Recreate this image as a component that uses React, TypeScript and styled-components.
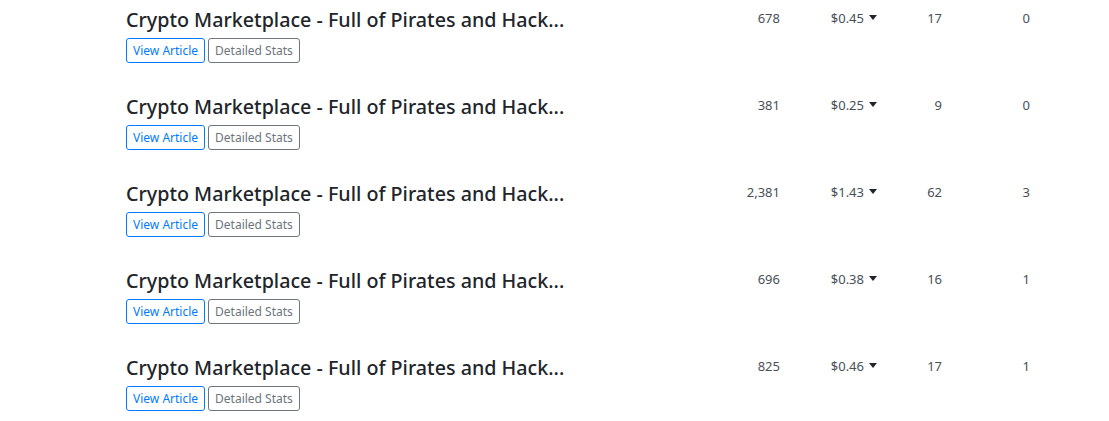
import React from "react";
import styled, { createGlobalStyle } from "styled-components";

interface Article {
  title: string;
  views: string;
  earnings: string;
  reads: number;
  comments: number;
}

const articles: Article[] = [
  { title: "Crypto Marketplace - Full of Pirates and Hack...", views: "678", earnings: "$0.45", reads: 17, comments: 0 },
  { title: "Crypto Marketplace - Full of Pirates and Hack...", views: "381", earnings: "$0.25", reads: 9, comments: 0 },
  { title: "Crypto Marketplace - Full of Pirates and Hack...", views: "2,381", earnings: "$1.43", reads: 62, comments: 3 },
  { title: "Crypto Marketplace - Full of Pirates and Hack...", views: "696", earnings: "$0.38", reads: 16, comments: 1 },
  { title: "Crypto Marketplace - Full of Pirates and Hack...", views: "825", earnings: "$0.46", reads: 17, comments: 1 },
];

const App: React.FC = () => {
  return (
    <>
      <GlobalStyle />
      <Table>
        {articles.map((a, i) => (
          <Row key={i}>
            <TitleCell>
              <Title>{a.title}</Title>
              <Actions>
                <Button variant="primary">View Article</Button>
                <Button variant="secondary">Detailed Stats</Button>
              </Actions>
            </TitleCell>
            <NumCell>{a.views}</NumCell>
            <NumCell>
              <Earnings>{a.earnings}</Earnings>
            </NumCell>
            <NumCell>{a.reads}</NumCell>
            <NumCell>{a.comments}</NumCell>
          </Row>
        ))}
      </Table>
    </>
  );
};

export default App;

const GlobalStyle = createGlobalStyle`
  body {
    margin: 0;
    background: #fff;
    font-family: "Noto Sans", "Open Sans", sans-serif;
    color: #212529;
  }
`;

const Table = styled.div`
  width: 1109px;
  padding-left: 126px;
  box-sizing: border-box;
`;

const Row = styled.div`
  display: grid;
  grid-template-columns: 560px 94px 97px 65px 88px;
  align-items: start;
  padding: 8px 0 24px;
  height: 87px;
  box-sizing: border-box;
`;

const TitleCell = styled.div`
  display: flex;
  flex-direction: column;
  gap: 6px;
`;

const Title = styled.h5`
  margin: 0;
  font-size: 19.7px;
  font-weight: 500;
  line-height: 24px;
  color: #212529;
  white-space: nowrap;
`;

const Actions = styled.div`
  display: flex;
  gap: 3px;
`;

const Button = styled.button<{ variant: "primary" | "secondary" }>`
  font-family: inherit;
  font-size: 12px;
  line-height: 19px;
  padding: 2px 6px;
  border-radius: 3px;
  background: #fff;
  cursor: pointer;
  border: 1px solid ${(p) => (p.variant === "primary" ? "#007bff" : "#6c757d")};
  color: ${(p) => (p.variant === "primary" ? "#007bff" : "#6c757d")};
`;

const NumCell = styled.div`
  text-align: right;
  font-size: 13px;
  line-height: 20px;
  color: #495057;
`;

const Earnings = styled.span`
  &::after {
    content: "";
    display: inline-block;
    margin-left: 5px;
    vertical-align: 3px;
    border-top: 5px solid #212529;
    border-left: 4.5px solid transparent;
    border-right: 4.5px solid transparent;
  }
`;
